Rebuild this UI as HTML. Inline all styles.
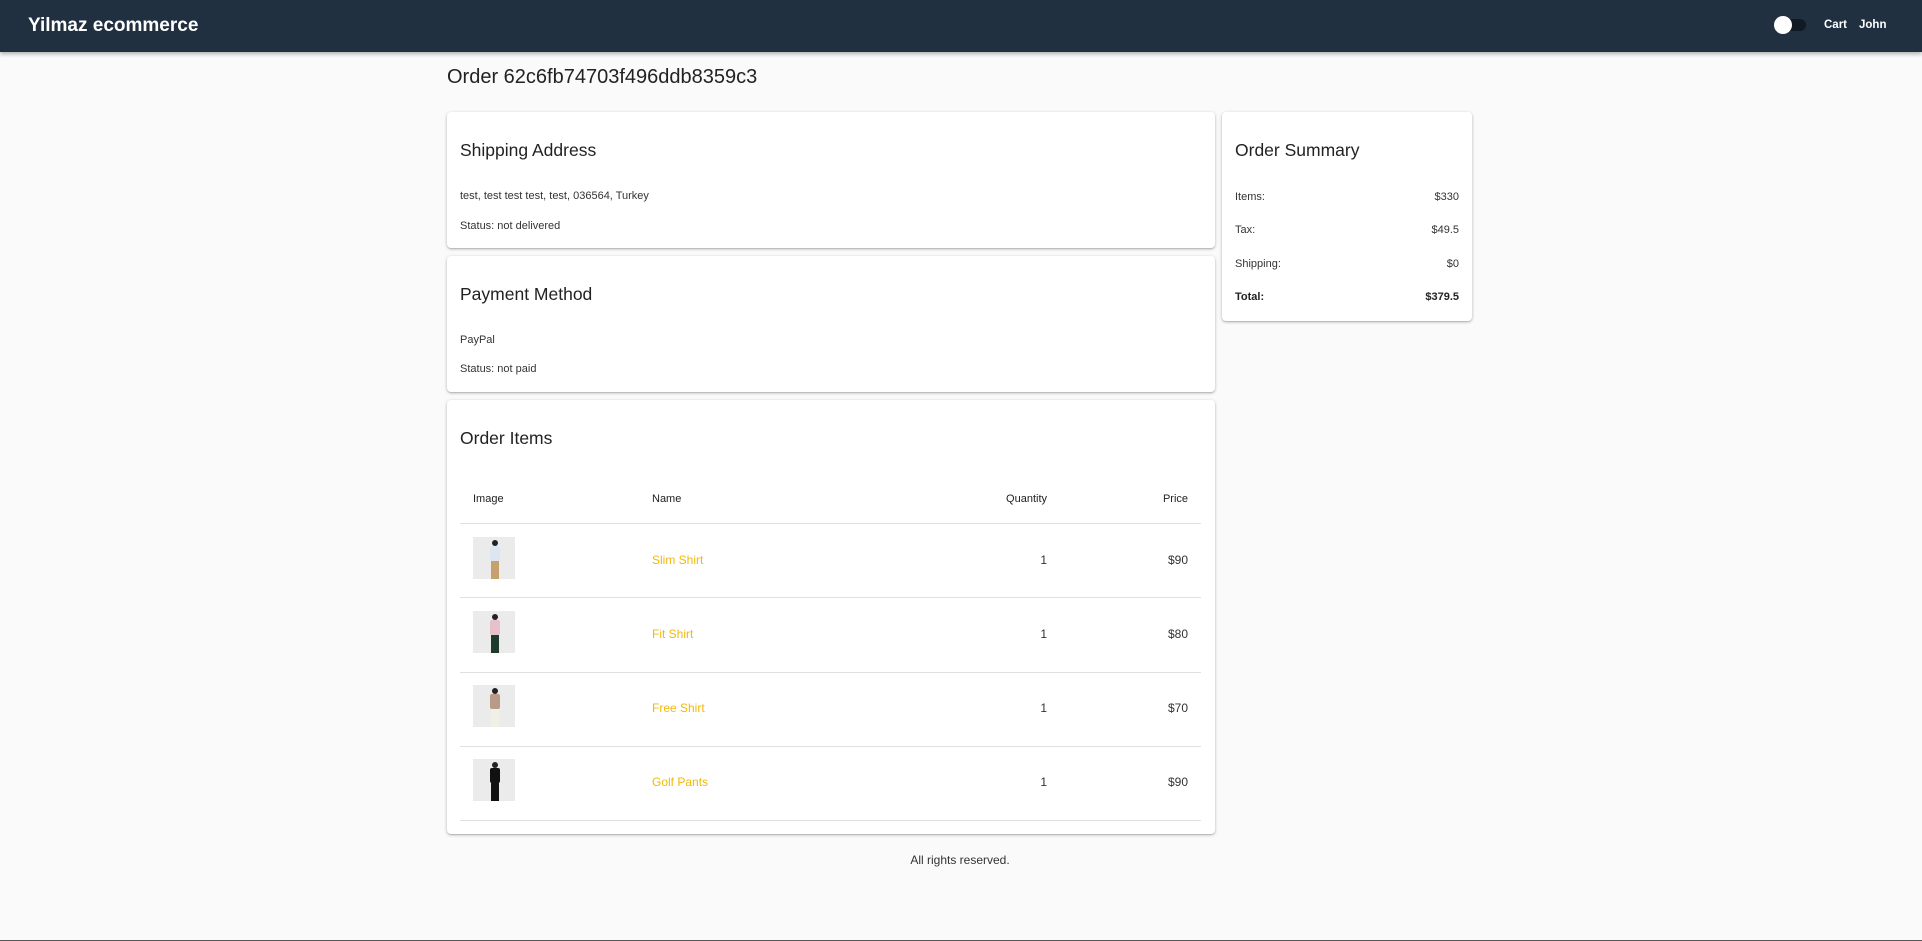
<!DOCTYPE html>
<html><head><meta charset="utf-8"><style>
*{box-sizing:border-box;margin:0;padding:0}
body{width:1922px;height:941px;background:#fafafa;font-family:"Liberation Sans",Arial,sans-serif;color:#222;position:relative;overflow:hidden}
.hdr{position:absolute;left:0;top:0;width:1922px;height:52px;background:#203040;box-shadow:0 2px 4px rgba(0,0,0,.3)}
.brand{position:absolute;left:28px;top:15px;color:#fff;font-weight:bold;font-size:19px}
.tog{position:absolute;left:1776px;top:19px;width:30px;height:12px;border-radius:6px;background:#111a24}
.tog i{position:absolute;left:-2px;top:-3px;width:18px;height:18px;border-radius:50%;background:#fff}
.nav{position:absolute;top:19px;color:#fff;font-weight:bold;font-size:11.5px}
.card{position:absolute;background:#fff;border-radius:4px;box-shadow:0 1px 3px rgba(0,0,0,.25),0 1px 1px rgba(0,0,0,.12)}
.h{position:absolute;font-size:17.5px;color:#222}
.t{position:absolute;font-size:11px;color:#333}
.a{position:absolute}
.line{position:absolute;left:13px;width:741px;height:1px;background:#e0e0e0}
.img{position:absolute;left:26px;width:42px;height:42px;background:#ebebeb;overflow:hidden}
.img b{position:absolute;left:19px;top:3px;width:6px;height:6px;border-radius:50%;background:#222}
.img s{position:absolute;left:17px;top:9px;width:10px;height:15px;border-radius:2px}
.img u{position:absolute;left:18px;top:24px;width:8px;height:18px}
.nm{position:absolute;left:205px;color:#f0b90b;font-size:12px}
.r{position:absolute;text-align:right;font-size:12px;color:#333}
</style></head><body>
<div class="hdr"><div class="brand">Yilmaz ecommerce</div><div class="tog"><i></i></div><div class="nav" style="left:1824px">Cart</div><div class="nav" style="left:1859px">John</div></div>
<div class="a" style="left:447px;top:66px;font-size:20px;color:#222">Order 62c6fb74703f496ddb8359c3</div>

<div class="card" style="left:447px;top:112px;width:768px;height:136px">
<div class="h" style="left:13px;top:28px">Shipping Address</div>
<div class="t" style="left:13px;top:78px">test, test test test, test, 036564, Turkey</div>
<div class="t" style="left:13px;top:108px">Status: not delivered</div>
</div>
<div class="card" style="left:447px;top:256px;width:768px;height:136px">
<div class="h" style="left:13px;top:28px">Payment Method</div>
<div class="t" style="left:13px;top:78px">PayPal</div>
<div class="t" style="left:13px;top:107px">Status: not paid</div>
</div>
<div class="card" style="left:447px;top:400px;width:768px;height:434px">
<div class="h" style="left:13px;top:28px">Order Items</div>
<div class="t" style="left:26px;top:93px;color:#222">Image</div>
<div class="t" style="left:205px;top:93px;color:#222">Name</div>
<div class="r" style="left:500px;width:100px;top:93px;font-size:11px;color:#222">Quantity</div>
<div class="r" style="left:640px;width:101px;top:93px;font-size:11px;color:#222">Price</div>
<div class="line" style="top:123px"></div>
<div class="img" style="top:137px"><b></b><s style="background:#dbe6f2"></s><u style="background:#c8a070"></u></div><div class="nm" style="top:153px">Slim Shirt</div><div class="r" style="left:500px;width:100px;top:153px">1</div><div class="r" style="left:640px;width:101px;top:153px">$90</div>
<div class="line" style="top:197px"></div>
<div class="img" style="top:211px"><b></b><s style="background:#e8c0cc"></s><u style="background:#1e3a2c"></u></div><div class="nm" style="top:227px">Fit Shirt</div><div class="r" style="left:500px;width:100px;top:227px">1</div><div class="r" style="left:640px;width:101px;top:227px">$80</div>
<div class="line" style="top:272px"></div>
<div class="img" style="top:285px"><b></b><s style="background:#b89a88"></s><u style="background:#f2efe6"></u></div><div class="nm" style="top:301px">Free Shirt</div><div class="r" style="left:500px;width:100px;top:301px">1</div><div class="r" style="left:640px;width:101px;top:301px">$70</div>
<div class="line" style="top:346px"></div>
<div class="img" style="top:359px"><b></b><s style="background:#111"></s><u style="background:#111"></u></div><div class="nm" style="top:375px">Golf Pants</div><div class="r" style="left:500px;width:100px;top:375px">1</div><div class="r" style="left:640px;width:101px;top:375px">$90</div>
<div class="line" style="top:420px"></div>
</div>

<div class="card" style="left:1222px;top:112px;width:250px;height:209px">
<div class="h" style="left:13px;top:28px">Order Summary</div>
<div class="t" style="left:13px;top:79px">Items:</div><div class="r" style="left:100px;width:137px;top:79px;font-size:11px">$330</div>
<div class="t" style="left:13px;top:112px">Tax:</div><div class="r" style="left:100px;width:137px;top:112px;font-size:11px">$49.5</div>
<div class="t" style="left:13px;top:146px">Shipping:</div><div class="r" style="left:100px;width:137px;top:146px;font-size:11px">$0</div>
<div class="t" style="left:13px;top:179px;font-weight:bold;color:#222">Total:</div><div class="r" style="left:100px;width:137px;top:179px;font-size:11px;font-weight:bold;color:#222">$379.5</div>
</div>

<div class="a" style="left:0;width:1920px;text-align:center;top:853px;font-size:12px;color:#333">All rights reserved.</div>
<div class="a" style="left:0;top:940px;width:1922px;height:1px;background:#555"></div>
</body></html>
